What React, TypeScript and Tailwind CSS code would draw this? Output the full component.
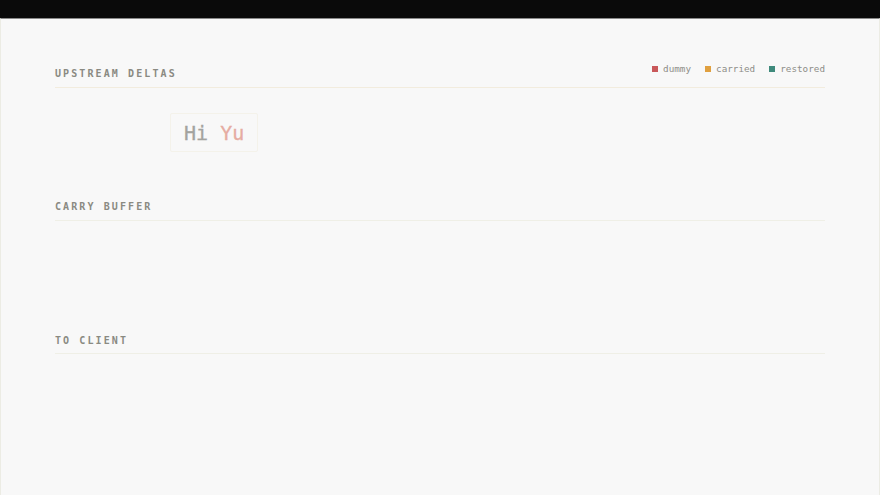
import React from "react";

const mono = { fontFamily: '"DejaVu Sans Mono", "Liberation Mono", monospace' };

function Heading({ children }: { children: React.ReactNode }) {
  return (
    <div className="text-[10px] leading-[12px] font-bold tracking-[2.1px] text-[#8a8a82]">
      {children}
    </div>
  );
}

function Legend() {
  const items = [
    { label: "dummy", color: "bg-[#c9585a]" },
    { label: "carried", color: "bg-[#e0a040]" },
    { label: "restored", color: "bg-[#3f8a7c]" },
  ];
  return (
    <div className="flex items-center gap-[14px] mb-[5px]">
      {items.map((it) => (
        <div key={it.label} className="flex items-center gap-[5px]">
          <span className={`inline-block w-[6px] h-[6px] ${it.color}`} />
          <span className="text-[9.3px] leading-[12px] text-[#8e8e88]">{it.label}</span>
        </div>
      ))}
    </div>
  );
}

export default function App() {
  return (
    <div className="w-[880px] h-[495px] overflow-hidden bg-[#f8f8f8]" style={mono}>
      <div className="h-[18px] bg-[#0a0a0a]" />
      <div className="h-[477px] border-t border-t-[#8a8a8a] border-l border-r border-l-[#ecece4] border-r-[#ecece4] px-[54px] pt-[44px]">
        <section>
          <div className="flex items-end justify-between pb-[7px] border-b border-b-[#f2ecde]">
            <Heading>UPSTREAM DELTAS</Heading>
            <Legend />
          </div>
          <div className="h-[112px] pt-[25px]">
            <div className="ml-[115px] inline-flex items-center h-[39px] px-[13px] border border-[#f4f2ea] rounded-[2px] text-[20px] leading-none font-normal [-webkit-text-stroke:0.3px_currentColor]">
              <span className="text-[#a3a39f]">Hi</span>
              <span className="text-[#a3a39f]">&nbsp;</span>
              <span className="text-[#e6aca2]">Yu</span>
            </div>
          </div>
        </section>
        <section>
          <div className="flex items-end justify-between pt-[1px] pb-[7px] border-b border-b-[#efefe6]">
            <Heading>CARRY BUFFER</Heading>
          </div>
          <div className="h-[113px]" />
        </section>
        <section>
          <div className="flex items-end justify-between pt-[1px] pb-[6px] border-b border-b-[#efefe6]">
            <Heading>TO CLIENT</Heading>
          </div>
        </section>
      </div>
    </div>
  );
}
